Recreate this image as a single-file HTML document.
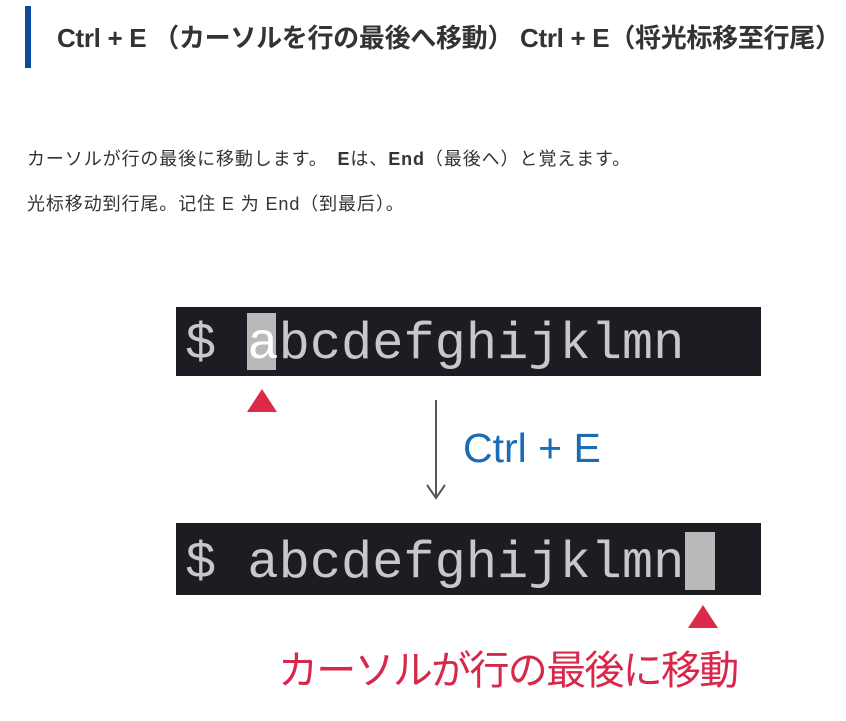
<!DOCTYPE html>
<html><head><meta charset="utf-8"><style>
body{margin:0;width:846px;height:721px;background:#fff;position:relative;overflow:hidden;font-family:"Liberation Sans","Noto Sans CJK JP",sans-serif;color:#333}
.a{position:absolute;white-space:nowrap}
.bar{left:25px;top:6px;width:6px;height:62px;background:#0d4a9c}
.h{left:57px;top:22px;font-size:26px;font-weight:bold;line-height:32px;letter-spacing:-0.3px;color:#333}
.p{left:27px;font-size:18px;line-height:20px;color:#333;letter-spacing:0.9px}
.term{left:176px;width:585px;background:#1c1d22}
.mono{font-family:"Liberation Mono","DejaVu Sans Mono",monospace;font-size:52px;color:#c8c8c8;line-height:60px}
.tri{width:0;height:0;border-left:15px solid transparent;border-right:15px solid transparent;border-bottom:23px solid #dc2a4b}
</style></head><body>
<div class="a bar"></div>
<div class="a h">Ctrl + E （カーソルを行の最後へ移動） Ctrl + E（将光标移至行尾）</div>
<div class="a p" style="top:149px">カーソルが行の最後に移動します。　<b>E</b>は、<b>End</b>（最後へ）と覚えます。</div>
<div class="a p" style="top:194px">光标移动到行尾。记住 E 为 End（到最后）。</div>

<div class="a term" style="top:307px;height:69px"></div>
<div class="a" style="left:247px;top:313px;width:29px;height:57px;background:#b9b9b9"></div>
<div class="a mono" style="left:185px;top:315px">$ <span style="color:#fff">a</span>bcdefghijklmn</div>
<div class="a tri" style="left:247px;top:389px"></div>

<div class="a" style="left:435px;top:400px;width:2px;height:98px;background:#555"></div>
<svg class="a" style="left:426px;top:484px" width="20" height="16"><path d="M1 1 L10 14 L19 1" fill="none" stroke="#555" stroke-width="2"/></svg>
<div class="a" style="left:463px;top:424px;font-size:41px;color:#1a6cb5;line-height:48px">Ctrl + E</div>

<div class="a term" style="top:523px;height:72px"></div>
<div class="a" style="left:685px;top:532px;width:30px;height:58px;background:#b9b9b9"></div>
<div class="a mono" style="left:185px;top:534px">$ abcdefghijklmn</div>
<div class="a tri" style="left:688px;top:605px"></div>

<div class="a" style="left:278px;top:645px;font-size:40px;line-height:52px;color:#d8284a;letter-spacing:-1.7px">カーソルが行の最後に移動</div>
</body></html>
